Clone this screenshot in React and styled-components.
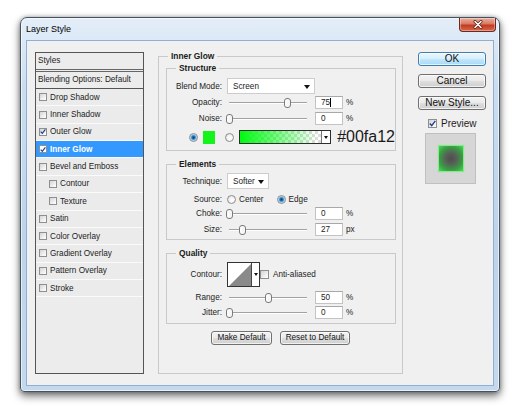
import React from 'react';
import styled, { createGlobalStyle } from 'styled-components';

const GlobalStyle = createGlobalStyle`
  html, body { margin: 0; padding: 0; background: #fff; }
  body { font-family: "Liberation Sans", Arial, sans-serif; font-size: 8.2px; color: #1c1c1c; }
  * { box-sizing: border-box; }
`;

const Page = styled.div`
  width: 520px;
  height: 407px;
  padding: 17px 0 0 20px;
  overflow: hidden;
`;

const Window = styled.div`
  width: 480px;
  height: 375px;
  border: 1px solid #45525f;
  border-radius: 7px 7px 4px 4px;
  background: linear-gradient(180deg, #e4eef9 0%, #cbdef1 18%, #bcd3ea 60%, #c4d9ee 100%);
  box-shadow: 0 4px 8px rgba(0, 0, 0, 0.55), 0 0 4px rgba(0, 0, 0, 0.3), inset 0 0 0 1px rgba(255, 255, 255, 0.6);
  display: flex;
  flex-direction: column;
  padding: 0 5px 5px 5px;
`;

const TitleBar = styled.div`
  height: 22px;
  display: flex;
  justify-content: space-between;
  align-items: flex-start;
`;

const Title = styled.span`
  font-size: 9px;
  line-height: 22px;
  color: #000;
`;

const CloseButton = styled.div`
  width: 37px;
  height: 14px;
  margin-right: -2px;
  border: 1px solid #6b2a20;
  border-top: none;
  border-radius: 0 0 4px 4px;
  background: linear-gradient(180deg, #eab0a0 0%, #d97a63 45%, #c23a20 55%, #d8694d 100%);
  box-shadow: inset 0 0 0 1px rgba(255, 255, 255, 0.35);
  display: flex;
  align-items: center;
  justify-content: center;
`;

const Client = styled.div`
  flex: 1;
  border: 1px solid #8fb0d3;
  background: #f0f0f0;
  display: flex;
  align-items: flex-start;
  padding: 10px 7px 11px 8px;
`;

/* ---- left list ---- */
const StyleList = styled.div`
  width: 109px;
  height: 322px;
  margin-top: 1px;
  border: 1px solid #555;
  background: #ececec;
  display: flex;
  flex-direction: column;
`;

const ListHead = styled.div`
  height: 19px;
  line-height: 16px;
  padding-left: 2px;
  border-bottom: 3px double #666;
`;

const ListBlend = styled.div`
  height: 17px;
  line-height: 16px;
  padding-left: 2px;
  border-bottom: 1px solid #555;
`;

const ListItem = styled.div`
  height: 17.36px;
  display: flex;
  align-items: center;
  padding-left: ${(p) => (p.$sub ? 13 : 3)}px;
  border-bottom: 1px solid #fafafa;
  background: ${(p) => (p.$active ? '#3399ff' : '#ebebeb')};
  color: ${(p) => (p.$active ? '#fff' : '#1c1c1c')};
  font-weight: ${(p) => (p.$active ? 'bold' : 'normal')};
  white-space: nowrap;
`;

const Check = styled.span`
  width: ${(p) => p.$size}px;
  height: ${(p) => p.$size}px;
  margin-right: ${(p) => p.$gap}px;
  border: 1px solid #8f8f8f;
  background: ${(p) => (p.$white ? '#fff' : 'linear-gradient(135deg, #d3d3d3 0%, #f4f4f4 70%, #fff 100%)')};
  display: inline-flex;
  align-items: center;
  justify-content: center;
  flex-shrink: 0;
`;

/* ---- main panel ---- */
const Panel = styled.fieldset`
  margin: 0 0 0 14px;
  width: 245px;
  height: 323px;
  min-width: 0;
  padding: 2px 7px 0 7px;
  border: 1px solid #c9c9c9;
  display: flex;
  flex-direction: column;
`;

const Legend = styled.legend`
  font-weight: bold;
  font-size: 8.4px;
  line-height: 10px;
  padding: 0 3px;
  margin-left: ${(p) => p.$indent}px;
`;

const Group = styled.fieldset`
  margin: ${(p) => p.$top}px 0 0 0;
  padding: 0 0 ${(p) => p.$bottom}px 0;
  width: 230px;
  min-width: 0;
  border: 1px solid #c9c9c9;
`;

const Row = styled.div`
  display: flex;
  align-items: center;
  height: ${(p) => p.$h}px;
  margin-top: ${(p) => p.$top}px;
  padding-left: ${(p) => p.$pad || 0}px;
  white-space: nowrap;
`;

const Label = styled.span`
  width: 55px;
  margin-right: 5px;
  text-align: right;
  flex-shrink: 0;
`;

const Select = styled.span`
  width: ${(p) => p.$w}px;
  height: 16px;
  border: 1px solid #cdcdcd;
  background: #fff;
  display: flex;
  align-items: center;
  justify-content: space-between;
  padding: 1px 4px 0 5px;
`;

const Arrow = styled.span`
  width: 0;
  height: 0;
  border-left: 3px solid transparent;
  border-right: 3px solid transparent;
  border-top: 4px solid #111;
`;

const Slider = styled.div`
  position: relative;
  width: 82px;
  height: 13px;
  flex-shrink: 0;
  &::before {
    content: '';
    position: absolute;
    left: 2px;
    right: 2px;
    top: 6px;
    height: 1px;
    background: #a2a2a2;
    box-shadow: 0 1px 0 #fff;
  }
`;

const Thumb = styled.svg`
  position: absolute;
  top: 2px;
  margin-left: -3.5px;
`;

const NumBox = styled.span`
  width: 28px;
  height: 13px;
  margin-left: 6px;
  border: 1px solid #c3c3c3;
  border-top-color: #a8a8a8;
  background: #fff;
  padding-left: 5px;
  display: inline-flex;
  align-items: center;
`;

const Caret = styled.span`
  width: 1px;
  height: 9px;
  background: #000;
`;

const Unit = styled.span`
  margin-left: 3px;
`;

const Radio = styled.span`
  width: 9px;
  height: 9px;
  margin-left: ${(p) => p.$left || 0}px;
  margin-right: ${(p) => p.$right || 0}px;
  border-radius: 50%;
  border: 1px solid #8c8c8c;
  background: ${(p) =>
    p.$on
      ? 'radial-gradient(circle, #0c3a66 0%, #2b7fc4 35%, #8cc8ee 55%, #e6e6e6 75%, #fff 100%)'
      : 'radial-gradient(circle at 60% 60%, #fff 0%, #f2f2f2 50%, #d4d4d4 100%)'};
  flex-shrink: 0;
`;

const ColorChip = styled.span`
  width: 13px;
  height: 13px;
  margin-left: 5px;
  background: #13f41b;
`;

const GradientPicker = styled.span`
  width: 96px;
  height: 14px;
  margin-left: 5px;
  border: 1px solid #2d2d2d;
  display: flex;
`;

const GradientFill = styled.span`
  flex: 1;
  background:
    linear-gradient(90deg, #00fa12 0%, rgba(0, 250, 18, 0.6) 40%, rgba(0, 250, 18, 0) 95%),
    repeating-conic-gradient(#dcdcdc 0% 25%, #fff 0% 50%) 0 0 / 6px 6px;
`;

const DropPart = styled.span`
  width: 9px;
  border-left: 1px solid #777;
  background: #fff;
  display: flex;
  align-items: center;
  justify-content: center;
`;

const SmallArrow = styled.span`
  width: 0;
  height: 0;
  border-left: 2px solid transparent;
  border-right: 2px solid transparent;
  border-top: 3px solid #111;
`;

const HexNote = styled.span`
  margin-left: 6px;
  font-size: 16px;
  line-height: 14px;
  color: #1a1a1a;
`;

const RadioText = styled.span`
  margin-left: 3px;
  margin-right: ${(p) => p.$right || 0}px;
`;

const ContourPicker = styled.span`
  width: 33px;
  height: 25px;
  border: 1px solid #333;
  background: #fff;
  display: flex;
`;

const ContourCurve = styled.svg`
  display: block;
`;

const ContourDrop = styled.span`
  width: 8px;
  border-left: 1px solid #444;
  display: flex;
  align-items: center;
  justify-content: center;
`;

const ButtonRow = styled.div`
  display: flex;
  justify-content: center;
  gap: 8px;
  margin-top: 7px;
`;

const Button = styled.button`
  width: ${(p) => p.$w}px;
  height: 14px;
  padding: 0;
  font-family: inherit;
  font-size: ${(p) => (p.$big ? '10px' : '8.2px')};
  line-height: 12px;
  color: #111;
  border: 1px solid ${(p) => (p.$primary ? '#3c7fb1' : '#707070')};
  border-radius: 3px;
  background: ${(p) =>
    p.$primary
      ? 'linear-gradient(180deg, #eaf6fd 0%, #d9f0fc 45%, #bee6fd 55%, #a7d9f5 100%)'
      : 'linear-gradient(180deg, #f2f2f2 0%, #ebebeb 45%, #dddddd 55%, #cfcfcf 100%)'};
  box-shadow: inset 0 0 0 1px rgba(255, 255, 255, 0.7);
`;

/* ---- right column ---- */
const Side = styled.div`
  width: 68px;
  margin: 1px 0 0 15px;
  display: flex;
  flex-direction: column;
  gap: 8px;
`;

const PreviewRow = styled.div`
  display: flex;
  align-items: center;
  height: 11px;
  padding-left: 10px;
  font-size: 10px;
`;

const PreviewWell = styled.div`
  width: 51px;
  height: 51px;
  margin: -4px 0 0 7px;
  background: #d6d6d6;
  border: 1px solid #c0c0c0;
  display: flex;
  align-items: center;
  justify-content: center;
`;

const GlowSquare = styled.div`
  width: 24px;
  height: 25px;
  background: radial-gradient(circle, #4e4e4e 0%, #575e57 30%, #3a9e45 68%, #45dd57 100%);
  box-shadow: 0 0 1px 1px #86ea8d;
`;

const effects = [
  { name: 'Drop Shadow' },
  { name: 'Inner Shadow' },
  { name: 'Outer Glow', checked: true },
  { name: 'Inner Glow', checked: true, active: true },
  { name: 'Bevel and Emboss' },
  { name: 'Contour', sub: true },
  { name: 'Texture', sub: true },
  { name: 'Satin' },
  { name: 'Color Overlay' },
  { name: 'Gradient Overlay' },
  { name: 'Pattern Overlay' },
  { name: 'Stroke' },
];

function Tick() {
  return (
    <svg width="7" height="7" viewBox="0 0 7 7">
      <path d="M0.8 3.6 L2.7 5.6 L6.3 0.9" fill="none" stroke="#23408e" strokeWidth="1.4" />
    </svg>
  );
}

function CheckBox({ checked, size = 9, gap = 3, white }) {
  return (
    <Check $size={size} $gap={gap} $white={white}>
      {checked && <Tick />}
    </Check>
  );
}

function SliderField({ label, pos, value, unit = '%', caret }) {
  return (
    <>
      <Label>{label}</Label>
      <Slider>
        <Thumb width="7" height="10" viewBox="0 0 7 10" style={{ left: 2 + pos * 78 }}>
          <rect x="0.5" y="0.5" width="6" height="9" rx="2.5" fill="#f6f6f6" stroke="#7a7a7a" />
          <line x1="2" y1="2" x2="2" y2="8" stroke="#fff" />
        </Thumb>
      </Slider>
      <NumBox>
        {value}
        {caret && <Caret />}
      </NumBox>
      <Unit>{unit}</Unit>
    </>
  );
}

export default function App() {
  return (
    <Page>
      <GlobalStyle />
      <Window>
        <TitleBar>
          <Title>Layer Style</Title>
          <CloseButton>
            <svg width="10" height="9" viewBox="0 0 10 9">
              <path d="M2 1.5 L8 7.5 M8 1.5 L2 7.5" stroke="#5a1a10" strokeWidth="3" strokeLinecap="round" />
              <path d="M2 1.5 L8 7.5 M8 1.5 L2 7.5" stroke="#fff" strokeWidth="1.6" strokeLinecap="round" />
            </svg>
          </CloseButton>
        </TitleBar>
        <Client>
          <StyleList>
            <ListHead>Styles</ListHead>
            <ListBlend>Blending Options: Default</ListBlend>
            {effects.map((e) => (
              <ListItem key={e.name} $sub={e.sub} $active={e.active}>
                <CheckBox checked={e.checked} size={8} white={e.active} />
                {e.name}
              </ListItem>
            ))}
          </StyleList>

          <Panel>
            <Legend $indent={2}>Inner Glow</Legend>

            <Group $top={0} $bottom={6}>
              <Legend $indent={9}>Structure</Legend>
              <Row $h={16} $top={5}>
                <Label>Blend Mode:</Label>
                <Select $w={88}>
                  Screen
                  <Arrow />
                </Select>
              </Row>
              <Row $h={13} $top={2}>
                <SliderField label="Opacity:" pos={0.75} value="75" caret />
              </Row>
              <Row $h={13} $top={3}>
                <SliderField label="Noise:" pos={0} value="0" />
              </Row>
              <Row $h={14} $top={5} $pad={22}>
                <Radio $on />
                <ColorChip />
                <Radio $left={10} />
                <GradientPicker>
                  <GradientFill />
                  <DropPart>
                    <SmallArrow />
                  </DropPart>
                </GradientPicker>
                <HexNote>#00fa12</HexNote>
              </Row>
            </Group>

            <Group $top={8} $bottom={3}>
              <Legend $indent={9}>Elements</Legend>
              <Row $h={16} $top={4}>
                <Label>Technique:</Label>
                <Select $w={42}>
                  Softer
                  <Arrow />
                </Select>
              </Row>
              <Row $h={10} $top={5}>
                <Label>Source:</Label>
                <Radio />
                <RadioText $right={13}>Center</RadioText>
                <Radio $on />
                <RadioText>Edge</RadioText>
              </Row>
              <Row $h={13} $top={3}>
                <SliderField label="Choke:" pos={0} value="0" />
              </Row>
              <Row $h={13} $top={3}>
                <SliderField label="Size:" pos={0.176} value="27" unit="px" />
              </Row>
            </Group>

            <Group $top={8} $bottom={4}>
              <Legend $indent={9}>Quality</Legend>
              <Row $h={25} $top={4}>
                <Label>Contour:</Label>
                <ContourPicker>
                  <ContourCurve width="23" height="23" viewBox="0 0 23 23">
                    <polygon points="1,23 23,1 23,23" fill="#8a8a8a" />
                  </ContourCurve>
                  <ContourDrop>
                    <SmallArrow />
                  </ContourDrop>
                </ContourPicker>
                <CheckBox size={9} gap={4} />
                Anti-aliased
              </Row>
              <Row $h={13} $top={4}>
                <SliderField label="Range:" pos={0.5} value="50" />
              </Row>
              <Row $h={13} $top={2}>
                <SliderField label="Jitter:" pos={0} value="0" />
              </Row>
            </Group>

            <ButtonRow>
              <Button $w={61}>Make Default</Button>
              <Button $w={70}>Reset to Default</Button>
            </ButtonRow>
          </Panel>

          <Side>
            <Button $w={68} $big $primary>OK</Button>
            <Button $w={68} $big>Cancel</Button>
            <Button $w={68} $big>New Style...</Button>
            <PreviewRow>
              <CheckBox checked size={9} gap={4} />
              Preview
            </PreviewRow>
            <PreviewWell>
              <GlowSquare />
            </PreviewWell>
          </Side>
        </Client>
      </Window>
    </Page>
  );
}
